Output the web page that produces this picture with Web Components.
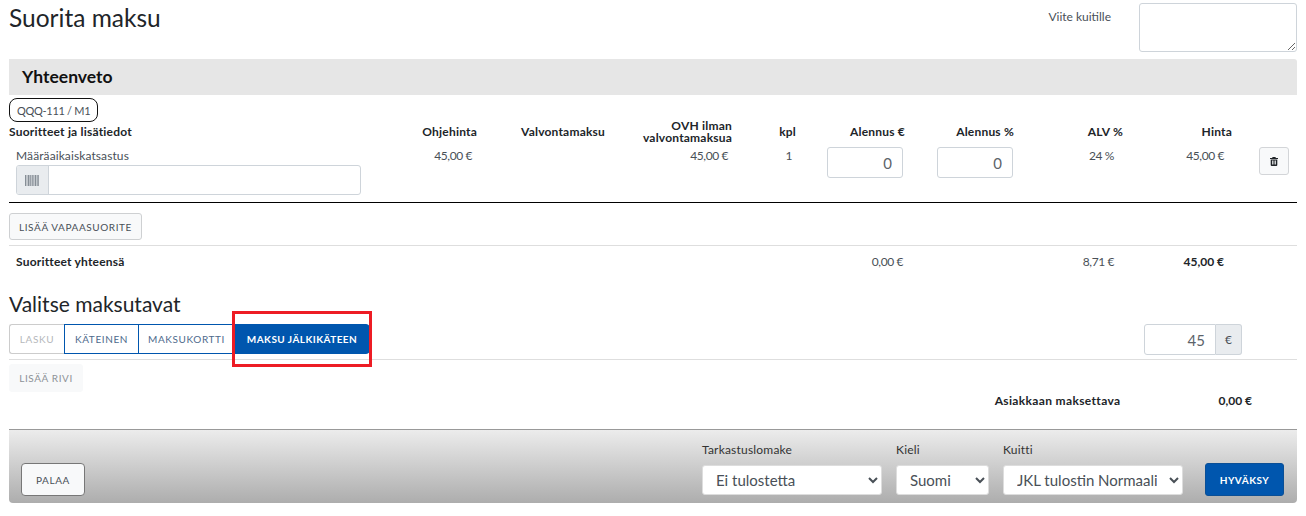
<!DOCTYPE html>
<html lang="fi">
<head>
<meta charset="utf-8">
<title>Suorita maksu</title>
<style>
html,body{margin:0;padding:0;background:#fff;}
body{font-family:Lato,"Noto Sans",sans-serif;color:#212529;font-size:12px;}
pay-page{--cols:372px 96px 128px 127px 64px 109px 109px 109px 109px 65px;}
</style>
</head>
<body>
<pay-page></pay-page>

<script>
var btnTemplate = document.createElement('template')
btnTemplate.innerHTML = `
<style>
:host{display:inline-flex;}
button{
  font-family:Lato,sans-serif;font-size:10px;letter-spacing:.6px;
  text-transform:uppercase;height:var(--h,27px);padding:0 var(--px,9px);width:var(--w,auto);
  background:#f8f9fa;color:#495057;border:1px solid #ced0d2;border-radius:3px;margin:0;
}
:host([kind=primary]) button{background:#0056ae;border-color:#0a4f96;color:#fff;font-weight:700;letter-spacing:.5px;}
:host([kind=muted]) button{background:#f8f9fa;border-color:#f8f9fa;color:#8d9297;}
:host([kind=back]) button{border-color:#777;border-radius:4px;}
</style>
<button type="button"><slot></slot></button>
`
class PayButton extends HTMLElement {
  constructor () {
    super()
    this.attachShadow({ mode: 'open' })
    this.shadowRoot.appendChild(btnTemplate.content.cloneNode(true))
  }
}
customElements.define('pay-button', PayButton)

var rowTemplate = document.createElement('template')
rowTemplate.innerHTML = `
<style>
:host{display:grid;grid-template-columns:var(--cols);}
</style>
<slot></slot>
`
class TableRow extends HTMLElement {
  constructor () {
    super()
    this.attachShadow({ mode: 'open' })
    this.shadowRoot.appendChild(rowTemplate.content.cloneNode(true))
  }
}
customElements.define('table-row', TableRow)

var cellTemplate = document.createElement('template')
cellTemplate.innerHTML = `
<style>
:host{display:block;text-align:right;font-size:12px;line-height:14px;color:#495057;letter-spacing:-.4px;}
:host([left]){text-align:left;letter-spacing:.1px;}
:host([strong]){font-weight:700;color:#212529;letter-spacing:0;}
:host([strong][left]){letter-spacing:.2px;}
:host([head]){font-weight:700;color:#212529;align-self:center;line-height:12.5px;letter-spacing:.2px;}
</style>
<slot></slot>
`
class TableCell extends HTMLElement {
  constructor () {
    super()
    this.attachShadow({ mode: 'open' })
    this.shadowRoot.appendChild(cellTemplate.content.cloneNode(true))
  }
}
customElements.define('table-cell', TableCell)

var numTemplate = document.createElement('template')
numTemplate.innerHTML = `
<style>
:host{display:flex;justify-content:flex-end;margin-top:-1px;}
input{
  width:76px;height:31px;box-sizing:border-box;border:1px solid #ced4da;border-radius:3px;
  text-align:right;font:15px Lato,sans-serif;color:#5c636a;padding:0 10px;margin:0;background:#fff;
}
</style>
<input type="text">
`
class NumBox extends HTMLElement {
  constructor () {
    super()
    this.attachShadow({ mode: 'open' })
    this.shadowRoot.appendChild(numTemplate.content.cloneNode(true))
    this.shadowRoot.querySelector('input').setAttribute('value', this.getAttribute('value') || '0')
  }
}
customElements.define('num-box', NumBox)

var summaryTemplate = document.createElement('template')
summaryTemplate.innerHTML = `
<style>
:host{display:block;}
.bar{background:#e6e6e6;height:36px;box-sizing:border-box;padding:0 0 1px 13px;display:flex;align-items:center;font-size:17.5px;font-weight:700;color:#111;border-radius:0 3px 0 0;}
.plate{display:inline-block;margin-top:3px;height:24px;line-height:23px;box-sizing:border-box;padding:0 7px;border:1px solid #111;border-radius:8px;font-size:11px;letter-spacing:-.3px;color:#495057;}
.plate-line{height:24px;display:flex;}
.head{min-height:26px;align-items:center;}
.items{margin-top:3px;height:54px;border-bottom:1px solid #000;}
.service{padding-left:7px;}
.service-name{line-height:14px;padding-top:1px;margin-bottom:2px;}
.group{display:flex;width:345px;height:30px;box-sizing:border-box;border:1px solid #ced4da;border-radius:3px;overflow:hidden;}
.prepend{width:32px;box-sizing:border-box;padding-right:2px;background:#e9ecef;border-right:1px solid #ced4da;display:flex;align-items:center;justify-content:center;}
.del{margin-left:27px;width:30px;height:28px;margin-top:-1px;box-sizing:border-box;background:#f8f9fa;border:1px solid #d3d5d8;border-radius:3px;display:flex;align-items:center;justify-content:center;}
.add{padding:10px 0 5px;border-bottom:1px solid #dedede;}
.totals{padding-top:9px;height:23px;}
</style>
<div class="bar"><slot name="title"></slot></div>
<div class="plate-line"><span class="plate"><slot name="plate"></slot></span></div>
<table-row class="head">
  <table-cell head left>Suoritteet ja lisätiedot</table-cell>
  <table-cell head>Ohjehinta</table-cell>
  <table-cell head>Valvontamaksu</table-cell>
  <table-cell head>OVH ilman<br>valvontamaksua</table-cell>
  <table-cell head>kpl</table-cell>
  <table-cell head>Alennus €</table-cell>
  <table-cell head>Alennus %</table-cell>
  <table-cell head>ALV %</table-cell>
  <table-cell head>Hinta</table-cell>
  <span></span>
</table-row>
<table-row class="items">
  <div class="service">
    <table-cell left class="service-name">Määräaikaiskatsastus</table-cell>
    <div class="group">
      <span class="prepend">
        <svg width="14" height="11" viewBox="0 0 14 11"><path fill="#868e96" d="M0 0h1v11H0zM1.600 0h.8v11h-.8zM3 0h1.500v11H3zM5.200 0h.8v11h-.8zM6.600 0h1.200v11H6.600zM8.400 0h.8v11h-.8zM9.800 0h1.500v11H9.800zM11.900 0h.8v11h-.8zM13.200 0h.8v11h-.8z"/></svg>
      </span>
    </div>
  </div>
  <table-cell style="padding:1px 5px 0 0">45,00 €</table-cell>
  <span></span>
  <table-cell style="padding:1px 4px 0 0">45,00 €</table-cell>
  <table-cell style="padding:1px 4px 0 0">1</table-cell>
  <num-box style="margin-right:2px"></num-box>
  <num-box style="margin-right:1px"></num-box>
  <table-cell style="padding:1px 9px 0 0">24 %</table-cell>
  <table-cell style="padding:1px 8px 0 0">45,00 €</table-cell>
  <div>
    <div class="del">
      <svg width="8" height="9" viewBox="0 0 8 9"><path fill="#212529" fill-rule="evenodd" d="M2.600 0h2.800l.5 1H8v1H0V1h2.100zM.7 2.600h6.600V8a1 1 0 0 1-1 1H1.700a1 1 0 0 1-1-1zM2 3.600v4h.8v-4zm1.600 0v4h.8v-4zm1.600 0v4H6v-4z"/></svg>
    </div>
  </div>
</table-row>
<div class="add"><pay-button style="--w:133px;--px:0">Lisää vapaasuorite</pay-button></div>
<table-row class="totals">
  <table-cell strong left style="padding-left:7px">Suoritteet yhteensä</table-cell>
  <span></span><span></span><span></span><span></span>
  <table-cell style="padding-right:2px">0,00 €</table-cell>
  <span></span>
  <table-cell style="padding-right:9px">8,71 €</table-cell>
  <table-cell strong style="padding-right:8px">45,00 €</table-cell>
  <span></span>
</table-row>
`
class SummaryTable extends HTMLElement {
  constructor () {
    super()
    this.attachShadow({ mode: 'open' })
    this.shadowRoot.appendChild(summaryTemplate.content.cloneNode(true))
  }
}
customElements.define('summary-table', SummaryTable)

var methodsTemplate = document.createElement('template')
methodsTemplate.innerHTML = `
<style>
:host{display:block;position:relative;}
.line{display:flex;justify-content:space-between;padding-right:55px;padding-bottom:4px;border-bottom:1px solid #dedede;}
.btns{display:flex;height:30px;}
.btns span{
  box-sizing:border-box;height:30px;display:flex;align-items:center;justify-content:center;
  font-family:Lato,sans-serif;font-size:10px;letter-spacing:.6px;
  border:1px solid #0056ae;margin-left:-1px;color:#4e6a8c;background:#fff;
}
.btns .lasku{width:56px;margin-left:0;border-color:#ccc;border-right-color:#0056ae;color:#b5b8bb;border-radius:3px 0 0 3px;}
.kateinen{width:75px;}
.kortti{width:97px;}
.btns .jalki{width:136px;background:#0056ae;color:#fff;font-weight:700;letter-spacing:.45px;border-radius:0 4px 4px 0;}
.amount{display:flex;height:31px;}
.amount input{
  width:72px;box-sizing:border-box;border:1px solid #ced4da;border-radius:3px 0 0 3px;text-align:right;
  font:15px Lato,sans-serif;color:#5c636a;padding:0 10px;margin:0;
}
.amount b{
  width:26px;box-sizing:border-box;background:#e9ecef;border:1px solid #ced4da;border-left:0;border-radius:0 3px 3px 0;
  display:flex;align-items:center;justify-content:center;font-weight:400;font-size:12px;color:#495057;
}
.mark{position:absolute;left:223px;top:-8px;width:140px;height:56px;box-sizing:border-box;border:3px solid #ed1c24;pointer-events:none;}
.add{padding-top:4px;}
</style>
<div class="line">
  <div class="btns">
    <span class="lasku">LASKU</span>
    <span class="kateinen">KÄTEINEN</span>
    <span class="kortti">MAKSUKORTTI</span>
    <span class="jalki">MAKSU JÄLKIKÄTEEN</span>
  </div>
  <div class="amount"><input type="text" value="45"><b>€</b></div>
</div>
<div class="add"><pay-button kind="muted" style="--h:28px;--w:74px;--px:0">Lisää rivi</pay-button></div>
<div class="mark"></div>
`
class PaymentMethods extends HTMLElement {
  constructor () {
    super()
    this.attachShadow({ mode: 'open' })
    this.shadowRoot.appendChild(methodsTemplate.content.cloneNode(true))
  }
}
customElements.define('payment-methods', PaymentMethods)

var pickTemplate = document.createElement('template')
pickTemplate.innerHTML = `
<style>
:host{display:flex;flex-direction:column;gap:8px;}
label{font-size:12px;line-height:14px;color:#333;letter-spacing:.2px;}
select{
  height:30px;box-sizing:border-box;width:var(--w);background:#fff;border:1px solid #ddd;border-radius:3px;
  font:15px Lato,sans-serif;color:#495057;padding:0 9px;margin:0;
}
</style>
<label></label>
<select></select>
`
class FooterPick extends HTMLElement {
  constructor () {
    super()
    this.attachShadow({ mode: 'open' })
    this.shadowRoot.appendChild(pickTemplate.content.cloneNode(true))
    this.shadowRoot.querySelector('label').textContent = this.getAttribute('label')
    var opt = document.createElement('option')
    opt.textContent = this.getAttribute('value')
    this.shadowRoot.querySelector('select').appendChild(opt)
  }
}
customElements.define('footer-pick', FooterPick)

var footerTemplate = document.createElement('template')
footerTemplate.innerHTML = `
<style>
:host{
  display:flex;justify-content:space-between;align-items:flex-end;box-sizing:border-box;height:74px;
  padding:0 13px 7px 12px;border-top:1px solid #999;border-radius:0 0 4px 4px;
  background:linear-gradient(#ececec,#adadad);
}
.right{display:flex;align-items:flex-end;}
.picks{display:flex;gap:14px;margin:0 22px 0 0;padding-bottom:1px;}
</style>
<pay-button kind="back" style="--h:33px;--w:64px;--px:0">Palaa</pay-button>
<div class="right">
  <div class="picks"><slot></slot></div>
  <pay-button kind="primary" style="--h:33px;--w:79px;--px:0">Hyväksy</pay-button>
</div>
`
class ActionFooter extends HTMLElement {
  constructor () {
    super()
    this.attachShadow({ mode: 'open' })
    this.shadowRoot.appendChild(footerTemplate.content.cloneNode(true))
  }
}
customElements.define('action-footer', ActionFooter)

var pageTemplate = document.createElement('template')
pageTemplate.innerHTML = `
<style>
:host{display:block;padding:0 9px;}
.top{display:flex;height:59px;box-sizing:border-box;}
h1{flex:1;margin:0;font-size:24.5px;font-weight:400;line-height:36px;color:#212529;}
.ref{font-size:12px;color:#495057;line-height:14px;margin:10px 28px 0 0;}
textarea{width:158px;height:49px;margin:3px 0 0;box-sizing:border-box;border:1px solid #ced4da;border-radius:3px;display:block;}
h2{margin:0;padding-top:11px;font-size:21px;font-weight:400;line-height:30px;color:#212529;}
.pay{padding:5px 0 0;}
.due{display:flex;justify-content:flex-end;font-size:12px;font-weight:700;letter-spacing:.35px;line-height:14px;padding:2px 45px 0 0;height:37px;box-sizing:border-box;color:#212529;}
.due span:last-child{margin-left:98px;letter-spacing:0;}
</style>
<div class="top">
  <h1>Suorita maksu</h1>
  <div class="ref">Viite kuitille</div>
  <textarea></textarea>
</div>
<summary-table>
  <span slot="title">Yhteenveto</span>
  <span slot="plate">QQQ-111 / M1</span>
</summary-table>
<h2>Valitse maksutavat</h2>
<payment-methods class="pay"></payment-methods>
<div class="due"><span>Asiakkaan maksettava</span><span>0,00 €</span></div>
<action-footer>
  <footer-pick label="Tarkastuslomake" value="Ei tulostetta" style="--w:180px"></footer-pick>
  <footer-pick label="Kieli" value="Suomi" style="--w:93px"></footer-pick>
  <footer-pick label="Kuitti" value="JKL tulostin Normaali" style="--w:180px"></footer-pick>
</action-footer>
`
class PayPage extends HTMLElement {
  constructor () {
    super()
    this.attachShadow({ mode: 'open' })
    this.shadowRoot.appendChild(pageTemplate.content.cloneNode(true))
  }
}
customElements.define('pay-page', PayPage)
</script>
</body>
</html>
